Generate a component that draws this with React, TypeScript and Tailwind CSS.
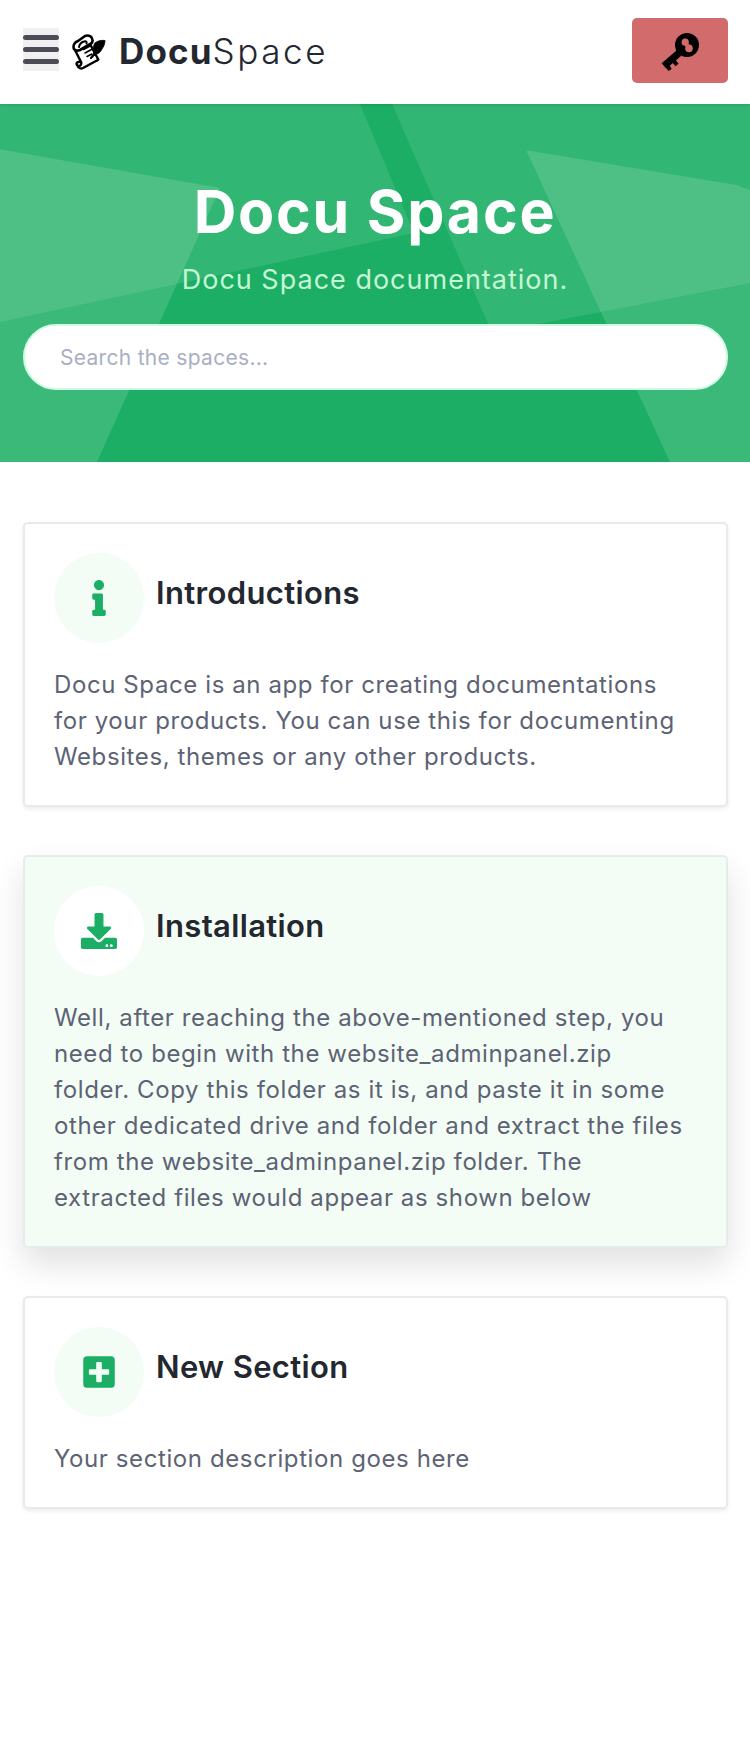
import React from "react";
import { FaDownload, FaInfo, FaPlusSquare } from "react-icons/fa";

function LogoIcon() {
  return (
    <svg viewBox="0 0 34 36" className="w-[34px] h-[36px]" fill="none" stroke="#000" strokeLinejoin="round" strokeLinecap="round">
      {/* top roll */}
      <path d="M2 15 C0.5 11 3 8 6 7 L13 2 C17 0.5 21 3 20.5 7 C20.3 9 19 10 17.5 10.5 L8 16 C5.5 17 3 16.5 2 15 Z" strokeWidth="2.6" />
      <path d="M7 13 C7.5 10 10 8 12 7.5 C14 6.5 15 8 14.5 9.5" strokeWidth="2" />
      {/* sheet */}
      <path d="M3 16 L9 28 M18 10 L26 25" strokeWidth="2.4" />
      {/* bottom roll */}
      <path d="M9 28 C10 31 7.5 33 5.5 31.5 C3.5 30 5 27.5 7 28 M5.5 31.5 C6.5 34.5 9 35 11 34 L24 27 C26 26 26.5 25.5 26 25" strokeWidth="2.4" />
      {/* writing */}
      <path d="M11.5 15.5 L18 12 M13 19 L19.5 15.5 M15 22.5 L20 20" strokeWidth="1.5" />
      {/* quill */}
      <path d="M23 9 C26 6.5 30 6 33 6.5 C33 10 31.5 13 30 15 C28.5 18 26.5 20 24 20 L19 25 L18 24 L22 19 C21 15 21 11.5 23 9 Z" fill="#000" strokeWidth="0.8" />
    </svg>
  );
}

function KeyIcon() {
  return (
    <svg viewBox="0 0 40 44" className="w-[40px] h-[44px]">
      <path d="M19 24 L4 37" stroke="#000" strokeWidth="7" />
      <path d="M7 36 L10 41 M13 31 L17 36" stroke="#000" strokeWidth="4" />
      <circle cx="27" cy="16" r="12" fill="#000" />
      <circle cx="25.2" cy="13.2" r="3.6" fill="#d26b6b" />
      <circle cx="29" cy="19.4" r="3.8" fill="#d26b6b" />
      <path d="M26 15 L28 17.5" stroke="#d26b6b" strokeWidth="4" />
    </svg>
  );
}

const sections = [
  {
    title: "Introductions",
    text: "Docu Space is an app for creating documentations for your products. You can use this for documenting Websites, themes or any other products.",
    icon: <FaInfo className="text-[#1bae64] w-[32px] h-[36px]" />,
  },
  {
    title: "Installation",
    text: "Well, after reaching the above-mentioned step, you need to begin with the website_adminpanel.zip folder. Copy this folder as it is, and paste it in some other dedicated drive and folder and extract the files from the website_adminpanel.zip folder. The extracted files would appear as shown below",
    icon: <FaDownload className="text-[#1bae64] w-[36px] h-[36px]" />,
    active: true,
  },
  {
    title: "New Section",
    text: "Your section description goes here",
    icon: <FaPlusSquare className="text-[#1bae64] w-[36px] h-[36px]" />,
  },
];

export default function App() {
  return (
    <div className="min-h-[1749px] bg-white font-['Inter',sans-serif]">
      <header className="relative z-10 h-[104px] pl-[23px] pr-[22px] pb-[3px] flex items-center justify-between bg-white shadow-[0_1px_3px_rgba(0,0,0,0.12)]">
        <div className="flex items-center">
          <div className="mt-[-2px] w-[36px] h-[43px] bg-[#f0f0f2] flex flex-col justify-center gap-[7px]">
            <span className="h-[5px] rounded-sm bg-[#4b4c55]" />
            <span className="h-[5px] rounded-sm bg-[#4b4c55]" />
            <span className="h-[5px] rounded-sm bg-[#4b4c55]" />
          </div>
          <div className="ml-[13px] mt-[3px]">
            <LogoIcon />
          </div>
          <div className="ml-[13px] mt-[2px] text-[35px] text-[#23272f]">
            <span className="font-bold tracking-[1.1px]">Docu</span>
            <span className="font-light tracking-[2.6px]">Space</span>
          </div>
        </div>
        <button className="w-[96px] h-[65px] rounded-[5px] bg-[#d26b6b] flex items-center justify-center">
          <KeyIcon />
        </button>
      </header>

      <section className="relative h-[358px] px-[23px] bg-[#1bae64] overflow-hidden">
        <svg className="absolute inset-0 w-full h-full" viewBox="0 0 750 358" preserveAspectRatio="none">
          <polygon points="0,0 360,0 414,129 0,218" fill="#fff" fillOpacity="0.1" />
          <polygon points="392,0 750,0 750,179 492,229" fill="#fff" fillOpacity="0.1" />
          <path d="M-30,40 L4,46 L220,84 L97,358 L-30,358 Z" fill="#fff" fillOpacity="0.14" />
          <path d="M528,50 Q524,46 531,47 L736,81 Q745,84 750,86 L750,358 L670,358 Z" fill="#fff" fillOpacity="0.14" />
        </svg>
        <div className="relative pt-[69px] text-center">
          <h1 className="text-[59px] leading-[78px] font-bold text-white tracking-[1.8px]">Docu Space</h1>
          <p className="mt-[9px] text-[27px] leading-[40px] text-[#c6f6d5] tracking-[1px]">Docu Space documentation.</p>
          <input
            className="mt-[24px] w-[705px] h-[66px] rounded-[33px] border-2 border-[#d1fae5] bg-white pl-[35px] pr-4 text-[21px] tracking-[0.3px] outline-none placeholder:text-[#a9afc2]"
            placeholder="Search the spaces..."
          />
        </div>
      </section>

      <main className="pt-[60px] pl-[23px] pr-[22px] flex flex-col gap-[48px]">
        {sections.map((s) => (
          <div
            key={s.title}
            className={`rounded-[5px] border-2 border-[#e8eaee] pt-[29px] pl-[29px] pr-[28px] pb-[30px] ${
              s.active
                ? "bg-[#f3fdf5] shadow-[0_16px_32px_rgba(0,0,0,0.12)]"
                : "bg-white shadow-[0_2px_4px_rgba(0,0,0,0.08)]"
            }`}
          >
            <div className="flex items-center">
              <div
                className={`w-[90px] h-[90px] rounded-full flex items-center justify-center ${
                  s.active ? "bg-white" : "bg-[#f3fdf5]"
                }`}
              >
                {s.icon}
              </div>
              <h3 className="ml-[12px] mt-[-10px] text-[31px] font-semibold text-[#23272f] tracking-[0.35px]">{s.title}</h3>
            </div>
            <p className="mt-[24px] pr-[8px] text-[24px] leading-[36px] text-[#5d6374] tracking-[0.6px]">{s.text}</p>
          </div>
        ))}
      </main>
    </div>
  );
}
